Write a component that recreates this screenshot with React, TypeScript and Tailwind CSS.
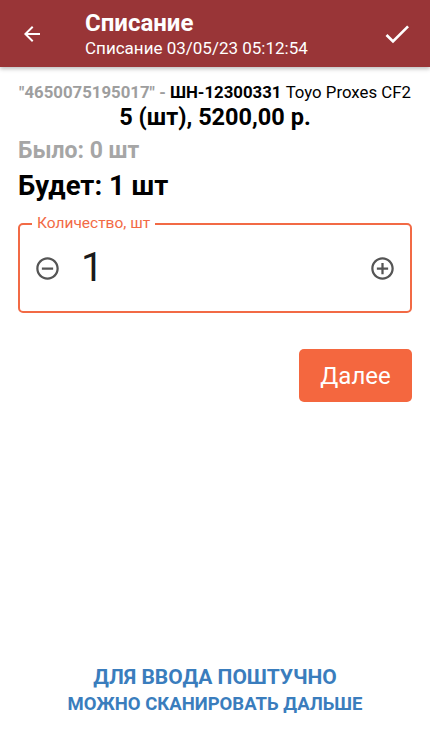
export default function App() {
  return (
    <div
      className="w-[430px] h-[737px] bg-white flex flex-col overflow-hidden"
      style={{ fontFamily: "Roboto, 'Liberation Sans', sans-serif" }}
    >
      {/* Toolbar */}
      <div className="h-[67px] bg-[#993537] flex items-center shadow-[0_2px_4px_rgba(0,0,0,0.25)] shrink-0">
        <div className="w-[85px] flex justify-start pl-[20px]">
          <svg width="24" height="24" viewBox="0 0 24 24" fill="white">
            <path d="M20 11H7.83l5.59-5.59L12 4l-8 8 8 8 1.41-1.41L7.83 13H20v-2z" />
          </svg>
        </div>
        <div className="flex-1 flex flex-col text-white">
          <div className="text-[24px] font-bold leading-[28px]">Списание</div>
          <div className="text-[17px] leading-[20px] mt-[1px]">Списание 03/05/23 05:12:54</div>
        </div>
        <div className="pr-[17px]">
          <svg width="32" height="32" viewBox="0 0 24 24" fill="white">
            <path d="M9 16.17L4.83 12l-1.42 1.41L9 19 21 7l-1.41-1.41z" />
          </svg>
        </div>
      </div>

      {/* Content */}
      <div className="px-[18px] pt-[15px] flex flex-col">
        <div className="text-[16.8px] leading-[20px] text-center whitespace-nowrap">
          <span className="text-[#9e9e9e] font-bold">"4650075195017" - </span>
          <span className="font-bold text-black">ШН-12300331</span>
          <span className="text-black"> Toyo Proxes CF2</span>
        </div>
        <div className="text-[23.5px] leading-[26px] font-bold text-black text-center mt-[2px]">
          5 (шт), 5200,00 р.
        </div>
        <div className="text-[23px] leading-[28px] font-bold text-[#a6a6a6] mt-[7px]">Было: 0 шт</div>
        <div className="text-[27.5px] leading-[32px] font-bold text-black mt-[5px]">Будет: 1 шт</div>

        {/* Quantity field */}
        <div className="relative mt-[21px] h-[90px] border-2 border-[#f26a45] rounded-[5px] flex items-center px-[14px]">
          <div className="absolute -top-[11px] left-[12px] bg-white px-[5px] text-[15.5px] leading-[18px] text-[#f26a45]">
            Количество, шт
          </div>
          <svg width="27" height="27" viewBox="0 0 24 24" fill="#555">
            <path d="M7 11v2h10v-2H7zm5-9C6.48 2 2 6.48 2 12s4.48 10 10 10 10-4.48 10-10S17.52 2 12 2zm0 18c-4.41 0-8-3.59-8-8s3.59-8 8-8 8 3.59 8 8-3.59 8-8 8z" />
          </svg>
          <div className="flex-1 text-[40px] leading-[46px] text-[#1a1a1a] pl-[20px]">1</div>
          <svg width="27" height="27" viewBox="0 0 24 24" fill="#555">
            <path d="M13 7h-2v4H7v2h4v4h2v-4h4v-2h-4V7zm-1-5C6.48 2 2 6.48 2 12s4.48 10 10 10 10-4.48 10-10S17.52 2 12 2zm0 18c-4.41 0-8-3.59-8-8s3.59-8 8-8 8 3.59 8 8-3.59 8-8 8z" />
          </svg>
        </div>

        <div className="flex justify-end mt-[36px]">
          <button className="w-[113px] h-[53px] bg-[#f4673f] rounded-[5px] text-white text-[24px]">
            Далее
          </button>
        </div>
      </div>

      <div className="flex-1" />
      <div className="pb-[20px] flex flex-col items-center text-[#3a7dbd] font-bold">
        <div className="text-[21px] leading-[27px]">ДЛЯ ВВОДА ПОШТУЧНО</div>
        <div className="text-[18.5px] leading-[26px]">МОЖНО СКАНИРОВАТЬ ДАЛЬШЕ</div>
      </div>
    </div>
  );
}
